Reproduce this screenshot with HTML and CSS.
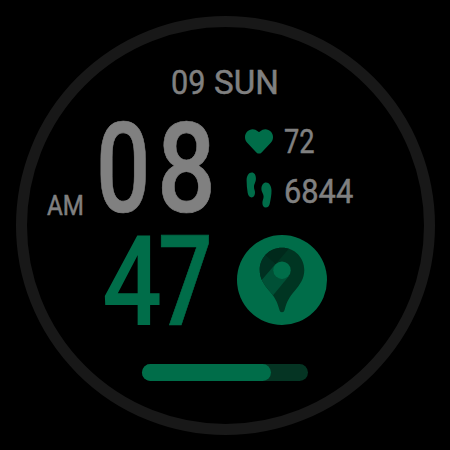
FILE: index.html
```html
<!DOCTYPE html>
<html lang="en">
<head>
<meta charset="utf-8">
<title>Watch face</title>
<link rel="stylesheet" href="styles.css">
</head>
<body>
<main class="face">
  <div class="ring"></div>
  <header class="date"><span class="date-num">09</span><span class="date-day">SUN</span></header>
  <section class="top">
    <div class="ampm"><span>AM</span></div>
    <div class="big hour"><span>0</span><span>8</span></div>
    <div class="stats">
      <div class="stat">
        <svg class="heart" viewBox="0 0 28 25"><path d="M14 24.6Q12.6 24.6 11.4 23.4L2.2 13.8C-.7 10.5-.7 5.7 2 2.8C5.1-.5 9.8-.5 12.7 2.3Q14 3.6 15.3 2.3C18.2-.5 22.9-.5 26 2.8C28.7 5.7 28.7 10.5 25.8 13.8L16.6 23.4Q15.4 24.6 14 24.6Z"/></svg>
        <span class="value pulse">72</span>
      </div>
      <div class="stat">
        <svg class="steps" viewBox="0 0 28 36"><path d="M6.8.5C9.2.5 10.9 2.8 10.9 6.5C10.9 10.5 9 11.7 9 15C9 17.5 10.2 18.5 10 21C9.8 23.8 8.6 25.4 6.7 25.4C4.6 25.4 3.2 23.8 2.7 21C2 17 1.6 12.8 1.6 8.5C1.6 3.8 3.7.5 6.8.5Z"/><path d="M21 10.5C18.5 10.5 16.4 13 16.4 16.8C16.4 20.4 18.6 21.4 18.6 24.7C18.6 27 17.3 28.4 17.4 31C17.5 33.8 18.6 35.5 20.7 35.5C22.9 35.5 24.4 34 24.9 31C25.7 27 26.6 22.8 26.5 18.5C26.4 13.8 24.2 10.5 21 10.5Z"/></svg>
        <span class="value count">6844</span>
      </div>
    </div>
  </section>
  <section class="bottom">
    <div class="big minute"><span>4</span><span>7</span></div>
    <svg class="map" viewBox="0 0 90 90">
      <defs><clipPath id="pin"><path d="M45 12.8C32 12.8 22.7 23 22.7 35C22.7 43.5 27 49.5 32 55.5C38 62.5 40.3 67 42 73.5C42.8 76.4 43.2 77.2 45 77.2C46.8 77.2 47.2 76.4 48 73.5C49.7 67 52 62.5 58 55.5C63 49.5 67.3 43.5 67.3 35C67.3 23 58 12.8 45 12.8Z"/></clipPath></defs>
      <circle cx="45" cy="45" r="45" fill="#006d49"/>
      <g clip-path="url(#pin)">
        <path fill="#003522" d="M20 10H70V80H20Z"/>
        <path fill="#00291b" d="M27 19L38.5 29.2L55 10H30Z"/>
        <path fill="#003021" d="M20 15L27.5 19.4L38.5 29.2L24 46L18 44Z"/>
        <path fill="#005036" d="M24.5 45.2L38.5 29L52 41L35.7 60.8L30 60Z"/>
      </g>
      <circle cx="45" cy="35.2" r="8.7" fill="#006d49"/>
    </svg>
  </section>
  <div class="battery"><div class="level"></div></div>
</main>
</body>
</html>
```
FILE: styles.css
```css
body {
  margin: 0;
  background: #000;
}

.face {
  position: relative;
  box-sizing: border-box;
  width: 450px;
  height: 450px;
  padding-top: 70px;
  overflow: hidden;
  background: #000;
  color: #808080;
  font-family: Roboto, "Liberation Sans", sans-serif;
}

.ring {
  position: absolute;
  inset: 15.5px;
  box-sizing: border-box;
  border: 11.5px solid #181818;
  border-radius: 50%;
}

.date {
  display: flex;
  height: 25px;
  margin-left: 171px;
  font-size: 34px;
  line-height: 25px;
}

.date span,
.ampm span,
.value {
  display: block;
  transform-origin: 0 50%;
  white-space: nowrap;
  -webkit-text-stroke: 0.5px currentColor;
}

.date-num {
  width: 42.5px;
  transform: scaleX(0.9);
}

.date-day {
  transform: scaleX(0.975);
}

.top {
  display: flex;
  height: 90px;
  margin-top: 28px;
  margin-left: 46.5px;
}

.ampm {
  width: 49.5px;
  padding-top: 73px;
  font-size: 27.5px;
  line-height: 20px;
}

.ampm span {
  transform: scaleX(0.88);
}

.big {
  display: flex;
  flex: none;
  height: 90px;
  font-size: 126px;
  font-weight: 500;
  line-height: 92px;
}

.big span {
  transform-origin: 0 50%;
}

.hour {
  width: 120px;
}

.hour span:first-child {
  width: 60.5px;
  transform: scaleX(0.76);
}

.hour span:last-child {
  width: 59.5px;
  transform: scaleX(0.82);
}

.hour span,
.minute span:last-child {
  -webkit-text-stroke: 0.7px currentColor;
}

.stats {
  display: flex;
  flex-direction: column;
  gap: 14px;
  margin-left: 29px;
}

.stat {
  display: flex;
  align-items: center;
  height: 36px;
}

.stat svg {
  flex: none;
  width: 28px;
  margin-right: 11px;
  fill: #006d49;
}

.heart {
  height: 25px;
}

.steps {
  height: 36px;
  margin-top: -2px;
}

.value {
  font-size: 34px;
  line-height: 26px;
}

.pulse {
  transform: scaleX(0.8);
}

.count {
  transform: scaleX(0.905);
}

.bottom {
  display: flex;
  height: 90px;
  margin-top: 23px;
  margin-left: 101.5px;
}

.minute {
  width: 125.5px;
  color: #006d49;
}

.minute span:first-child {
  width: 56px;
  transform: scaleX(0.84);
}

.minute span:last-child {
  width: 60px;
  transform: scaleX(0.765);
}

.map {
  width: 90px;
  height: 90px;
  margin-top: -1px;
  margin-left: 10px;
}

.battery {
  width: 166px;
  height: 17px;
  margin: 38px 0 0 142px;
  border-radius: 8.5px;
  background: #053423;
}

.level {
  width: 129px;
  height: 17px;
  border-radius: 8.5px;
  background: #006d49;
}
```
